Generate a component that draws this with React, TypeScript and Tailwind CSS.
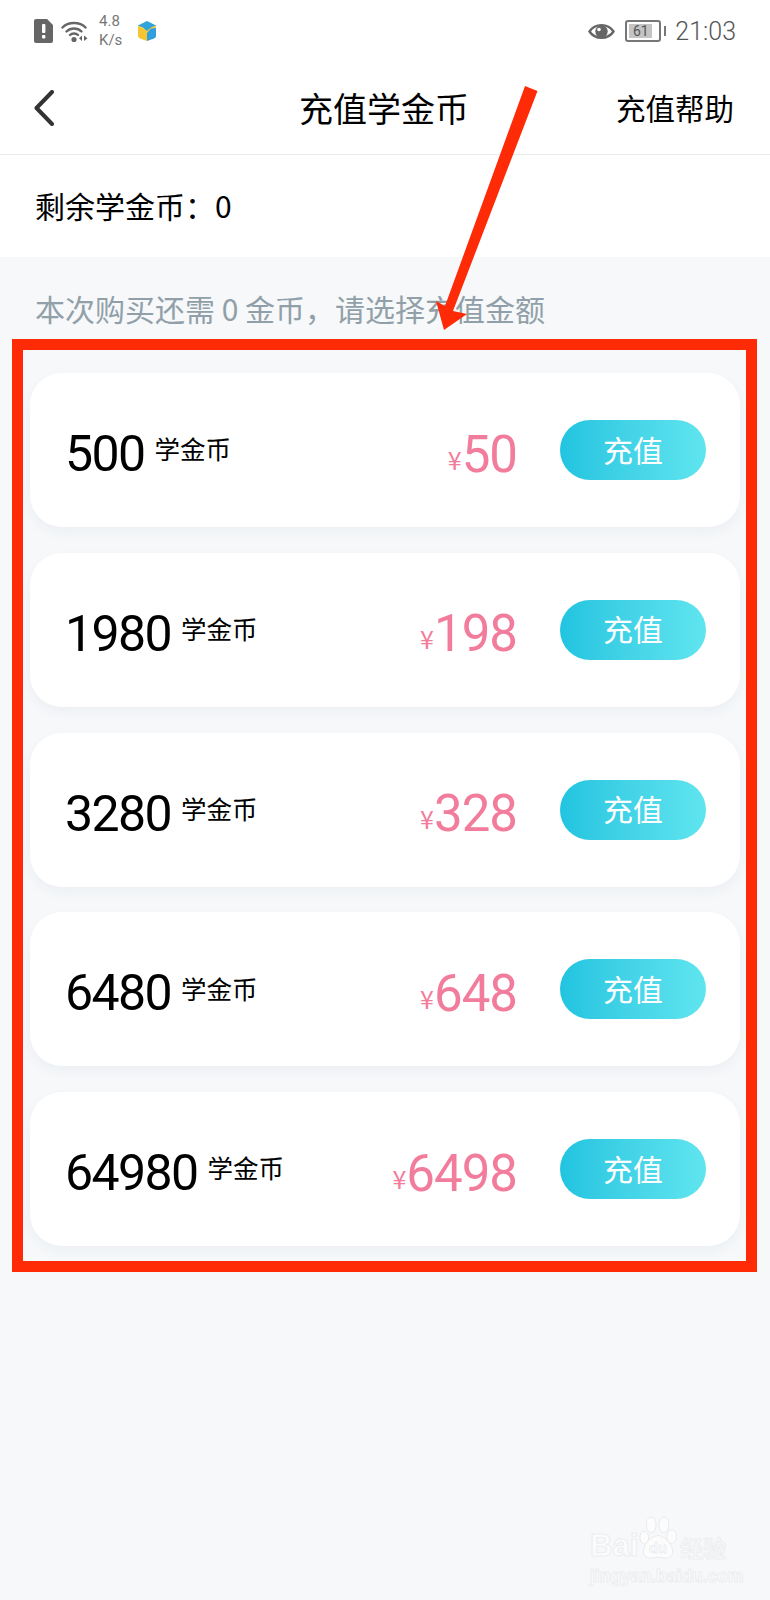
import React from "react";

const cjk = "font-['Noto_Sans_CJK_SC','Noto_Sans',sans-serif]";
const num = "font-['Roboto','Noto_Sans_CJK_SC',sans-serif]";

const plans = [
  { coins: "500", price: "50" },
  { coins: "1980", price: "198" },
  { coins: "3280", price: "328" },
  { coins: "6480", price: "648" },
  { coins: "64980", price: "6498" },
];

function AlertIcon() {
  return (
    <svg width="19" height="24" viewBox="0 0 19 24" className="shrink-0">
      <path d="M2 0H13L19 6V22a2 2 0 0 1-2 2H2a2 2 0 0 1-2-2V2a2 2 0 0 1 2-2Z" fill="#666" />
      <rect x="8" y="5" width="3.4" height="9" rx="1" fill="#fff" />
      <rect x="8" y="16" width="3.4" height="3.4" rx="1" fill="#fff" />
    </svg>
  );
}

function WifiIcon() {
  return (
    <svg width="27" height="23" viewBox="0 0 27 23" className="shrink-0">
      <g fill="none" stroke="#666" strokeWidth="2.4" strokeLinecap="round">
        <path d="M1.5 7.5C7 1.5 19 1.5 24.5 7.5" />
        <path d="M5.5 11.5C9.5 7.5 16.500 7.5 20.500 11.5" />
        <path d="M9 15C11 13 15 13 17 15" />
      </g>
      <circle cx="13" cy="19.500" r="2.600" fill="#666" />
      <path d="M21 15.500V21L18 18.200Z M23 15.500V21L26.500 18.200Z" fill="#666" />
    </svg>
  );
}

function CubeIcon() {
  return (
    <svg width="20" height="20" viewBox="0 0 20 20" className="shrink-0">
      <path d="M10 0L19 4.500V8L10 12L1 8V4.500Z" fill="#2ea3dc" />
      <path d="M1 4.500L6 6.500L10 10L14 6.500L19 4.500V9L10 13L1 9Z" fill="#f7cc45" />
      <path d="M1 7L6 7.500L10 12V20L3 17.500Q1 16.500 1 15Z" fill="#f7c531" />
      <path d="M19 7L14 7.500L10 12V20L17 17.500Q19 16.500 19 15Z" fill="#2f9fe0" />
    </svg>
  );
}

function EyeIcon() {
  return (
    <svg width="27" height="19" viewBox="0 0 27 19" className="shrink-0">
      <path d="M1.500 9.500C7 1 20 1 25.500 9.500C20 18 7 18 1.500 9.500Z" fill="none" stroke="#666" strokeWidth="2.400" />
      <circle cx="13.500" cy="9.500" r="6.200" fill="#666" />
      <circle cx="11" cy="7.500" r="1.800" fill="#fff" />
    </svg>
  );
}

function Watermark() {
  return (
    <div className="absolute left-[590px] top-[1516px] flex w-[138px] flex-col items-start text-[#fcfcfd] [-webkit-text-stroke:1px_#eceef0]">
      <div className="flex h-[45px] items-end font-['Liberation_Sans',sans-serif] text-[31px] font-bold leading-[30px]">
        <span>Bai</span>
        <svg width="42" height="45" viewBox="0 0 42 46" className="-ml-[1px] shrink-0">
          <g fill="#fcfcfd" stroke="#e8eaec" strokeWidth="1">
            <ellipse cx="7" cy="22" rx="4.500" ry="6.500" />
            <ellipse cx="14" cy="9" rx="5" ry="8" />
            <ellipse cx="27" cy="9" rx="5" ry="8" />
            <ellipse cx="35" cy="21" rx="5" ry="7" />
            <path d="M21 20C28 20 37 30 36 38C34 45 26 43 21 42C16 43 7 45 6 38C5 30 14 20 21 20Z" />
          </g>
          <text x="21" y="38" textAnchor="middle" fontSize="15" fontWeight="700" fill="#fcfcfd" stroke="#e2e4e7" strokeWidth="0.500" fontFamily="Liberation Sans">du</text>
        </svg>
        <span className={`${cjk} ml-[1px] text-[23px] font-medium leading-[28px]`}>经验</span>
      </div>
      <div className="mt-[6px] whitespace-nowrap font-['Liberation_Sans',sans-serif] text-[17.500px] font-bold leading-[18px]">jingyan.baidu.com</div>
    </div>
  );
}

function Annotation() {
  return (
    <>
      <div className="absolute left-[12px] top-[339px] h-[933px] w-[745px] border-[11px] border-[#ff2a06]" />
      <svg width="770" height="400" viewBox="0 0 770 400" className="pointer-events-none absolute left-0 top-0">
        <polygon points="525,86 537.500,91 453,311 467,314 444,330 436,301 445,306" fill="#ff2a06" />
      </svg>
    </>
  );
}

export default function App() {
  return (
    <div className={`${cjk} relative h-[1600px] w-[770px] overflow-hidden bg-[#f6f8fa] text-black`}>
      <div className="bg-white">
        <div className="flex h-[62px] items-center px-[34px] text-[#666]">
          <AlertIcon />
          <div className="ml-[8px]"><WifiIcon /></div>
          <div className={`${num} ml-[11px] w-[27px] text-[15px] leading-[19px] text-[#777]`}>
            <div>4.8</div>
            <div>K/s</div>
          </div>
          <div className="ml-[11px]"><CubeIcon /></div>
          <div className="ml-auto flex items-center">
            <EyeIcon />
            <div className="ml-[10px] flex h-[22px] w-[36px] items-center rounded-[3px] border-2 border-[#777] p-[2px]">
              <div className={`${num} flex h-full w-[23px] items-center justify-center bg-[#c4c4c4] text-[14px] text-[#555]`}>61</div>
            </div>
            <div className="ml-[3px] h-[10px] w-[2px] bg-[#777]" />
            <div className={`${num} ml-[9px] text-[25px] font-light leading-none text-[#555]`}>21:03</div>
          </div>
        </div>
        <div className="grid h-[93px] grid-cols-[1fr_auto_1fr] items-center border-b border-[#eaeaec] pl-[34px] pr-[36px]">
          <svg width="20" height="36" viewBox="0 0 20 36" className="shrink-0">
            <path d="M18 2L2.500 18L18 34" fill="none" stroke="#333" strokeWidth="4" strokeLinecap="round" strokeLinejoin="round" />
          </svg>
          <div className="text-[34px] leading-none">充值学金币</div>
          <div className="justify-self-end text-[29.500px] leading-none">充值帮助</div>
        </div>
        <div className="flex h-[102px] items-center pb-[2px] pl-[35px] text-[30px] leading-none">
          <span>剩余学金币：</span>
          <span>0</span>
        </div>
      </div>
      <div className="pl-[35px] pt-[34px] text-[30px] leading-[34px] text-[#91a0a8]">本次购买还需 0 金币，请选择充值金额</div>
      <div className="flex flex-col gap-[25.750px] px-[30px] pt-[48px]">
        {plans.map((p) => (
          <div
            key={p.coins}
            className="flex h-[154px] items-center rounded-[32px] bg-white pl-[35px] pr-[34px] shadow-[0_5px_12px_rgba(60,70,90,0.05)]"
          >
            <span className={`${num} translate-y-[4px] text-[50px] font-normal leading-none tracking-[-1.600px]`}>{p.coins}</span>
            <span className="ml-[10px] -translate-y-[2px] text-[25.500px] leading-none">学金币</span>
            <span className="ml-auto flex translate-y-[4px] items-baseline text-[#f27c9c]">
              <span className="-translate-y-[2px] text-[25px] leading-none">¥</span>
              <span className={`${num} text-[51px] leading-none tracking-[-1px]`}>{p.price}</span>
            </span>
            <button className="ml-[43px] h-[60px] w-[146px] rounded-full bg-gradient-to-r from-[#20c4e0] to-[#5fe5ef] pb-[3px] text-[30px] leading-none text-white">
              充值
            </button>
          </div>
        ))}
      </div>
      <Watermark />
      <Annotation />
    </div>
  );
}
